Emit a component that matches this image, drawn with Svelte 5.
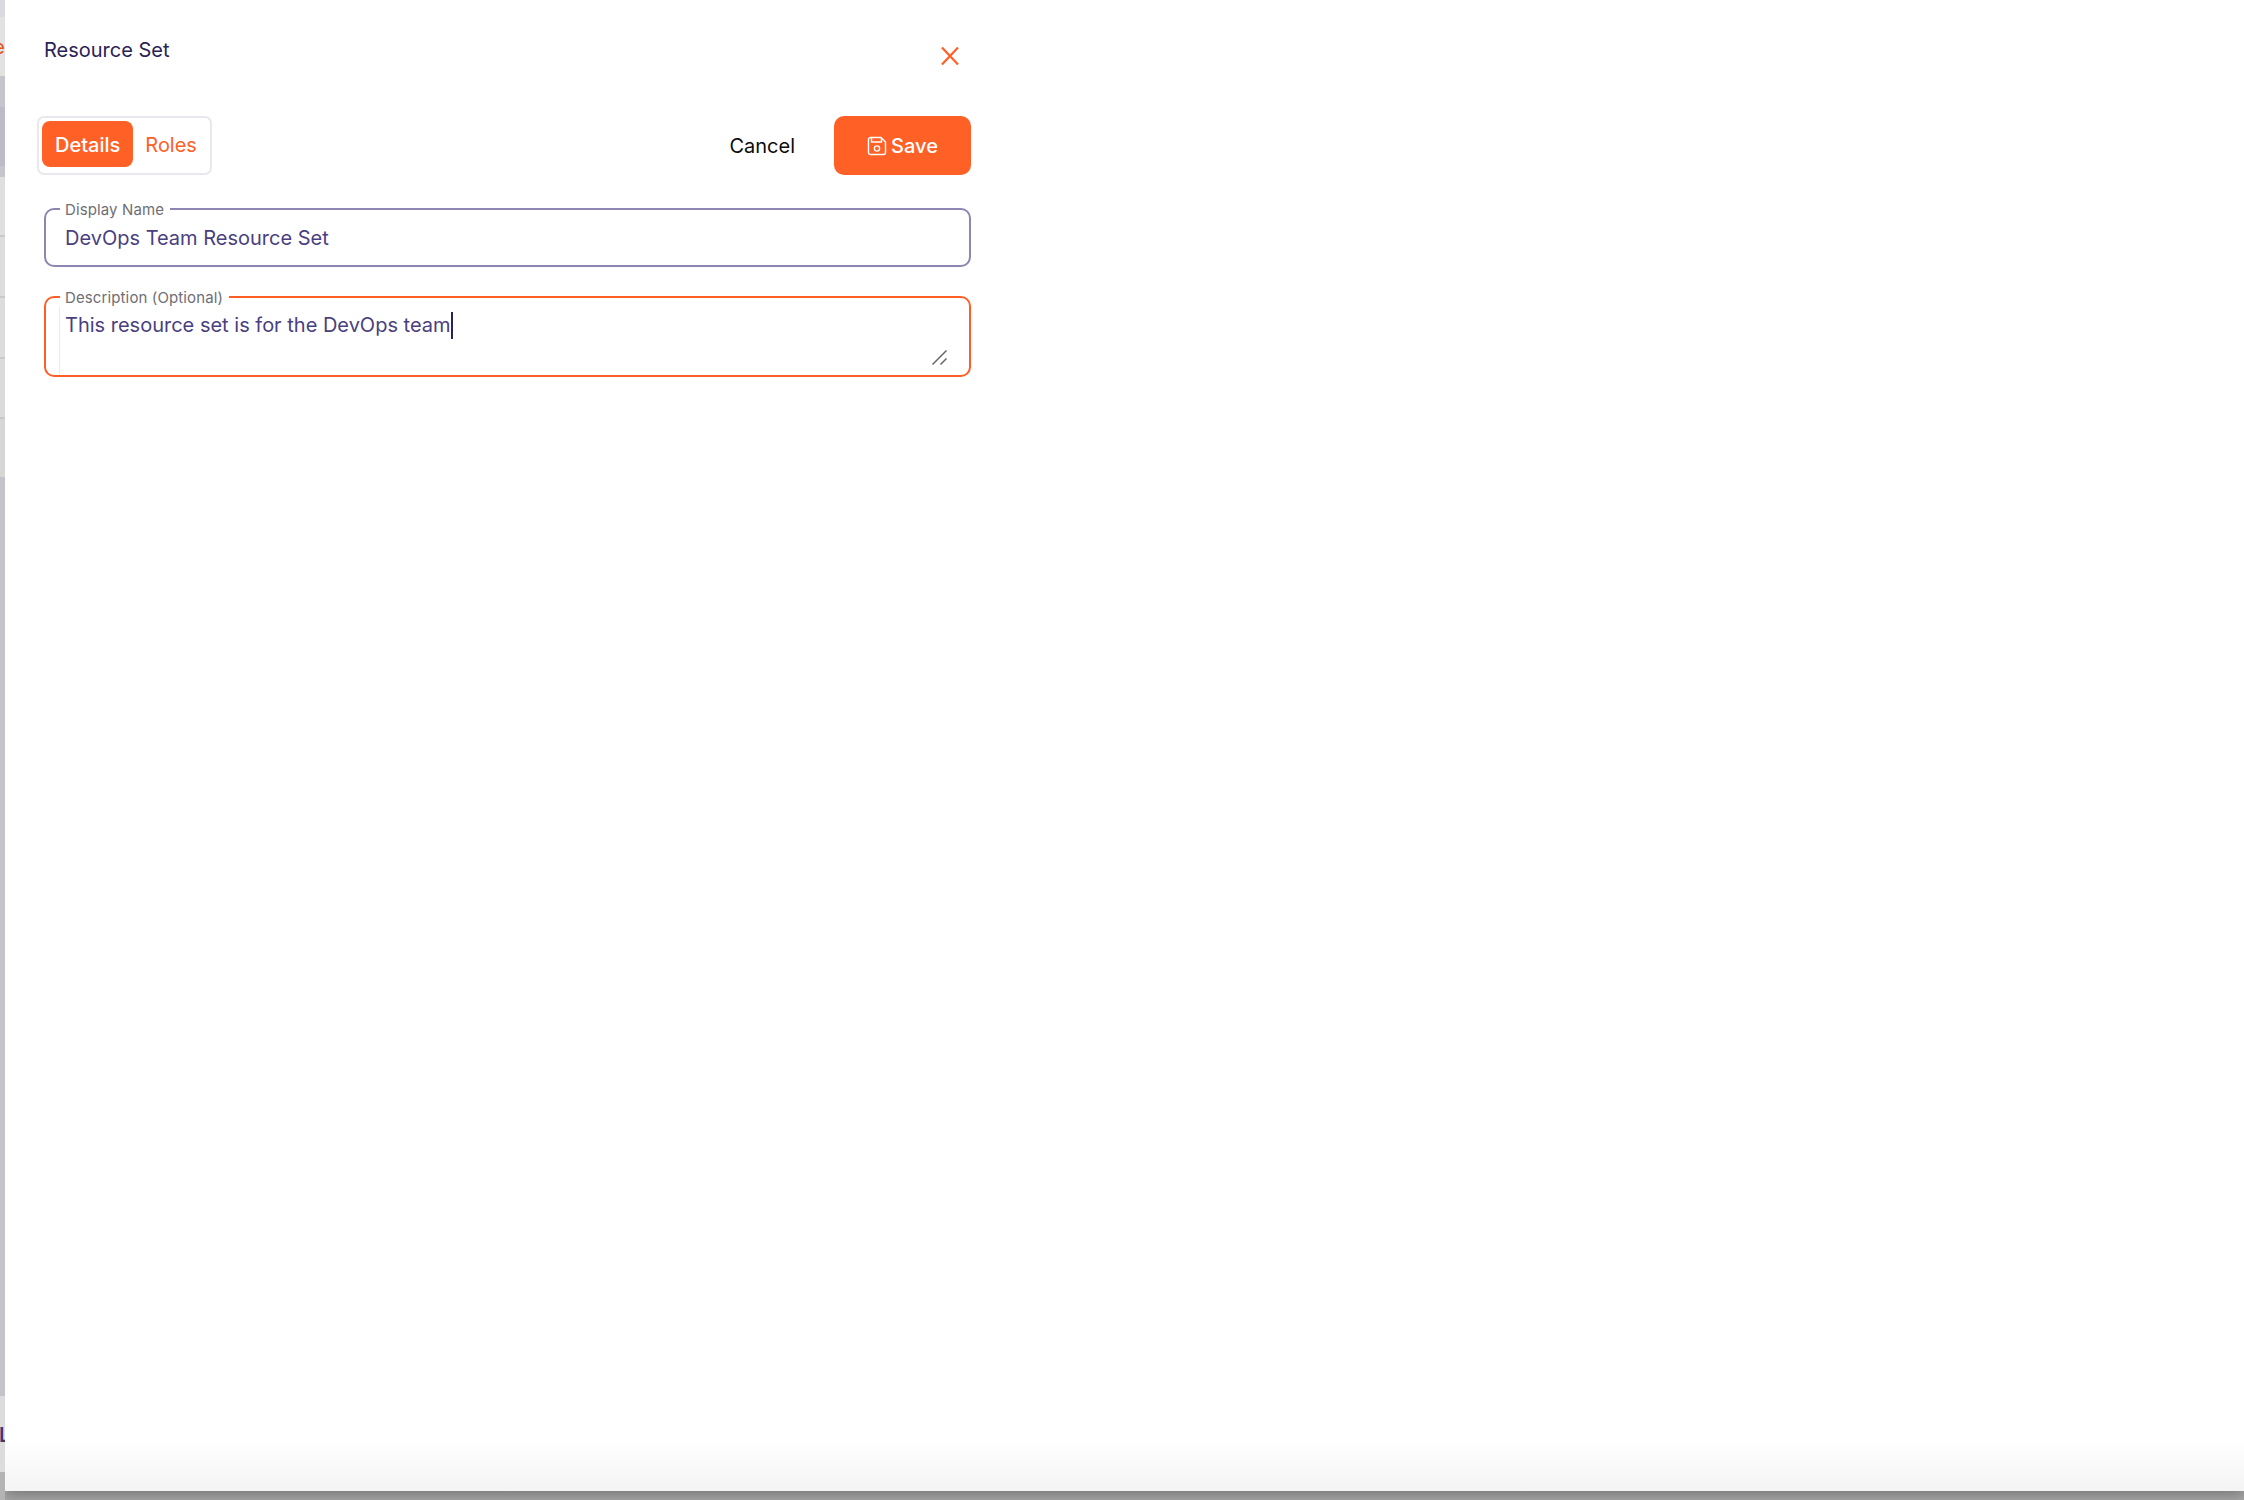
<script>
  // left strip is the page behind the drawer, cut down to the few px still visible
  const strip = [
    { h: 17, bg: "#d9d9df" },
    { h: 59, bg: "#e2e2e0", letter: "e", cls: "peek-e" },
    { h: 31, bg: "#c6c5cb" },
    { h: 59, bg: "#bcbbc8" },
    { h: 11, bg: "#c6c5cb" },
    { h: 58, bg: "#dfdfdd" },
    { h: 2, bg: "#c9c8ce" },
    { h: 59, bg: "#dddddb" },
    { h: 2, bg: "#c9c8ce" },
    { h: 59, bg: "#dcdcda" },
    { h: 2, bg: "#c9c8ce" },
    { h: 58, bg: "#dbdbd9" },
    { h: 2, bg: "#c9c8ce" },
    { h: 58, bg: "#d6d6d4" },
    { h: 919, bg: "#c4c3c9" },
    { h: 76, bg: "#dcdcdc", letter: "L", cls: "peek-l" },
    { h: 28, bg: "#b4b4b4" },
  ];
</script>

<div class="page">
  <div class="behind">
    {#each strip as s}
      <div class="band" style="height: {s.h}px; background: {s.bg}">
        {#if s.letter}<span class={s.cls}>{s.letter}</span>{/if}
      </div>
    {/each}
  </div>

  <div class="drawer">
    <div class="panel">
      <header class="head">
        <h2>Resource Set</h2>
        <button class="close" aria-label="Close">
          <svg width="18" height="18" viewBox="0 0 18 18">
            <path d="M1 0.5 L17 17.5 M17 0.5 L1 17.5" />
          </svg>
        </button>
      </header>

      <div class="toolbar">
        <div class="tabs">
          <button class="tab active">Details</button>
          <button class="tab">Roles</button>
        </div>
        <div class="actions">
          <button class="cancel">Cancel</button>
          <button class="save">
            <svg width="20" height="20" viewBox="0 0 20 20">
              <path d="M3.5 1.5 H14 L18.5 6 V16.5 a2 2 0 0 1 -2 2 H3.5 a2 2 0 0 1 -2 -2 V3.5 a2 2 0 0 1 2 -2 Z" />
              <path d="M4.5 1.5 V6 H14.5 V2" />
              <circle cx="10" cy="12.5" r="2.6" />
            </svg>
            Save
          </button>
        </div>
      </div>

      <fieldset class="field">
        <legend>Display Name</legend>
        <div class="value">DevOps Team Resource Set</div>
      </fieldset>

      <fieldset class="field focused">
        <legend>Description (Optional)</legend>
        <span class="seam"></span>
        <div class="value">This resource set is for the DevOps team<span class="caret"></span></div>
        <svg class="grip" width="15" height="15" viewBox="0 0 15 15">
          <path d="M0.5 14.5 L14.5 0.5 M8.5 14.5 L14.5 8.5" />
        </svg>
      </fieldset>
    </div>
  </div>
</div>

<style>
  :global(body) {
    margin: 0;
    background: #a8a8a8;
  }
  .page {
    display: flex;
    width: 2244px;
    height: 1500px;
    overflow: hidden;
    font-family: "Inter", "Noto Sans", sans-serif;
  }
  .behind {
    flex: 0 0 5px;
    overflow: hidden;
  }
  .band {
    position: relative;
    overflow: hidden;
  }
  .peek-e {
    position: absolute;
    right: 0;
    top: 18px;
    font-size: 20px;
    line-height: 24px;
    color: #e2531f;
  }
  .peek-l {
    position: absolute;
    left: -1px;
    top: 27px;
    font-size: 20px;
    line-height: 24px;
    font-weight: 600;
    color: #3f3672;
  }
  .drawer {
    flex: 1;
    height: 1491px;
    background: linear-gradient(to bottom, #fff 0, #fff 1440px, #f4f4f4 1491px);
    box-shadow: 0 4px 14px rgba(0, 0, 0, 0.3);
  }
  .panel {
    width: 927px;
    padding-left: 39px;
  }
  .head {
    display: flex;
    justify-content: space-between;
    align-items: flex-start;
    height: 116px;
    padding-top: 37px;
    box-sizing: border-box;
  }
  h2 {
    margin: 0;
    font-size: 20px;
    font-weight: 400;
    line-height: 26px;
    color: #2a2355;
  }
  .close {
    margin: 10px 12px 0 0;
    padding: 0;
    border: 0;
    background: none;
    line-height: 0;
  }
  .close path {
    fill: none;
    stroke: #ff6026;
    stroke-width: 2.2;
  }
  .toolbar {
    display: flex;
    justify-content: space-between;
    align-items: center;
    margin-left: -7px;
    height: 59px;
  }
  .tabs {
    display: flex;
    align-items: flex-start;
    gap: 2px;
    height: 59px;
    padding: 3px;
    box-sizing: border-box;
    border: 2px solid #e8e8ee;
    border-radius: 7px;
  }
  .tab {
    height: 46px;
    padding: 1px 10px 0;
    border: 0;
    border-radius: 8px;
    background: none;
    font: inherit;
    font-size: 20px;
    font-weight: 400;
    color: #ff6026;
  }
  .tab.active {
    padding: 1px 13px 0;
    background: #ff6026;
    color: #fff;
    font-weight: 500;
  }
  .actions {
    display: flex;
    align-items: center;
    gap: 39px;
  }
  .cancel {
    padding: 0;
    border: 0;
    background: none;
    font: inherit;
    font-size: 20px;
    font-weight: 400;
    color: #0c0c0c;
  }
  .save {
    display: flex;
    align-items: center;
    justify-content: center;
    gap: 4px;
    width: 137px;
    height: 59px;
    border: 0;
    border-radius: 10px;
    background: #ff6026;
    font: inherit;
    font-size: 20px;
    font-weight: 500;
    color: #fff;
  }
  .save svg {
    fill: none;
    stroke: #fff;
    stroke-width: 1.4;
  }
  .field {
    position: relative;
    margin: 24px 0 0;
    padding: 0 19px;
    min-width: 0;
    border: 2px solid #8e85b0;
    border-radius: 10px;
  }
  .field legend {
    margin-left: -5px;
    padding: 2px 6px 0 5px;
    font-size: 15px;
    line-height: 18px;
    letter-spacing: 0.12px;
    color: #6e6e73;
  }
  .value {
    height: 46px;
    font-size: 20px;
    line-height: 38px;
    color: #4a3f80;
  }
  .field.focused {
    margin-top: 20px;
    border-color: #ff5f26;
  }
  .field.focused .value {
    height: 68px;
    line-height: 36px;
  }
  .seam {
    position: absolute;
    left: 13px;
    top: 0;
    bottom: 0;
    width: 1px;
    background: #fbe6de;
  }
  .caret {
    display: inline-block;
    width: 2px;
    height: 27px;
    vertical-align: -7px;
    background: #2a2355;
  }
  .grip {
    position: absolute;
    right: 22px;
    bottom: 10px;
    fill: none;
    stroke: #666;
    stroke-width: 1.5;
  }
</style>
